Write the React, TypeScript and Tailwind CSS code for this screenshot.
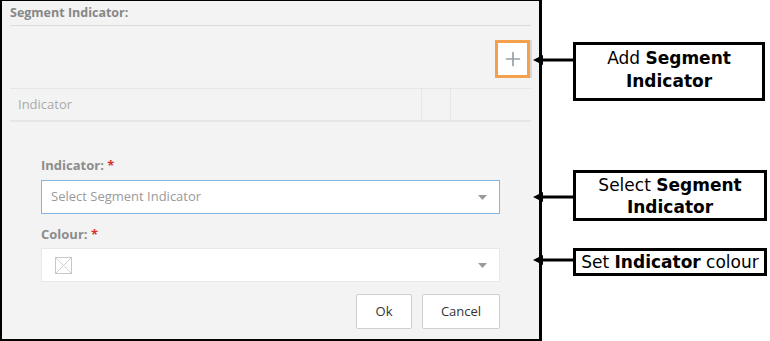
import { Plus } from 'lucide-react';

function Caret() {
    return (
        <svg width="9" height="5" viewBox="0 0 9 5" className="shrink-0">
            <path d="M0 0 L9 0 L4.5 5 Z" fill="#9a9a9a" />
        </svg>
    );
}

function Arrow() {
    return (
        <svg width="40" height="12" viewBox="0 0 40 12" className="shrink-0">
            <path d="M0 6 L10 1 L10 11 Z" fill="#000" />
            <rect x="8" y="4.5" width="32" height="3" fill="#000" />
        </svg>
    );
}

function Label({ text }: { text: string }) {
    return (
        <div className="text-[13px] font-bold text-[#8c8c8c] leading-4">
            {text} <span className="text-[#d9312b]">*</span>
        </div>
    );
}

function Panel() {
    return (
        <div className="w-[542px] h-[341px] shrink-0 bg-[#f3f3f3] border-l-2 border-t border-r-[3px] border-b-2 border-black px-2 font-['Open_Sans',sans-serif]">
            {/* title */}
            <div className="h-[25px] flex items-center border-b border-[#dcdcdc]">
                <span className="text-[12.5px] font-bold text-[#878787]">Segment Indicator:</span>
            </div>

            {/* add button */}
            <div className="h-[62px] flex justify-end items-start pt-[14px] pr-px">
                <button className="w-[35px] h-[38px] bg-white border-[3px] border-[#f5a04c] flex items-center justify-center shadow-[2px_0_0_#d8d8d8]">
                    <Plus size={22} strokeWidth={1.9} color="#99a1a9" />
                </button>
            </div>

            {/* table header */}
            <div className="h-[34px] flex border-t border-b-2 border-[#e6e6e6] text-[13px] text-[#aaaaaa]">
                <div className="flex-1 flex items-center pl-2">Indicator</div>
                <div className="w-[29px] border-l border-[#e6e6e6]" />
                <div className="w-[81px] border-l border-[#e6e6e6]" />
            </div>

            {/* form */}
            <div className="px-[31px] pt-[35px] flex flex-col">
                <Label text="Indicator:" />
                <div className="mt-[7px] h-[34px] bg-white border border-[#84b5e2] flex items-center justify-between pl-[9px] pr-[12px]">
                    <span className="text-[13px] text-[#9a9a9a]">Select Segment Indicator</span>
                    <Caret />
                </div>
                <div className="mt-[12px]">
                    <Label text="Colour:" />
                </div>
                <div className="mt-[6px] h-[34px] bg-white border border-[#e8e8e8] flex items-center justify-between pl-[13px] pr-[12px]">
                    <svg width="17" height="17" viewBox="0 0 17 17">
                        <rect x="0.5" y="0.5" width="16" height="16" fill="none" stroke="#c8c8c8" />
                        <path d="M1 1 L16 16 M16 1 L1 16" stroke="#d0d0d0" strokeWidth="1" />
                    </svg>
                    <Caret />
                </div>
                <div className="mt-[12px] flex justify-end gap-[10px]">
                    <button className="w-[56px] h-[35px] bg-white border border-[#cfcfcf] rounded-[2px] text-[13px] text-[#333]">Ok</button>
                    <button className="w-[78px] h-[35px] bg-white border border-[#cfcfcf] rounded-[2px] text-[13px] text-[#333]">Cancel</button>
                </div>
            </div>
        </div>
    );
}

export default function App() {
    return (
        <div className="w-[770px] h-[341px] bg-white flex overflow-hidden">
            <Panel />
            <div className="-ml-[9px] flex flex-col font-['DejaVu_Sans',sans-serif] text-[17px] text-black">
                <div className="mt-[42px] flex items-start">
                    <div className="mt-[12px]"><Arrow /></div>
                    <div className="w-[192px] h-[59px] border-[3px] border-black flex flex-col items-center justify-center leading-[23px] pb-[3px]">
                        <div>Add <b>Segment</b></div>
                        <div><b>Indicator</b></div>
                    </div>
                </div>
                <div className="mt-[69px] flex items-start">
                    <div className="mt-[21px]"><Arrow /></div>
                    <div className="w-[194px] h-[51px] border-[3px] border-black flex flex-col items-center justify-center leading-[22px]">
                        <div>Select <b>Segment</b></div>
                        <div><b>Indicator</b></div>
                    </div>
                </div>
                <div className="mt-[27px] flex items-start">
                    <div className="mt-[6px]"><Arrow /></div>
                    <div className="w-[194px] h-[28px] border-[3px] border-black flex items-center justify-center leading-[22px] whitespace-nowrap">
                        <span>Set <b>Indicator</b> colour</span>
                    </div>
                </div>
            </div>
        </div>
    );
}
